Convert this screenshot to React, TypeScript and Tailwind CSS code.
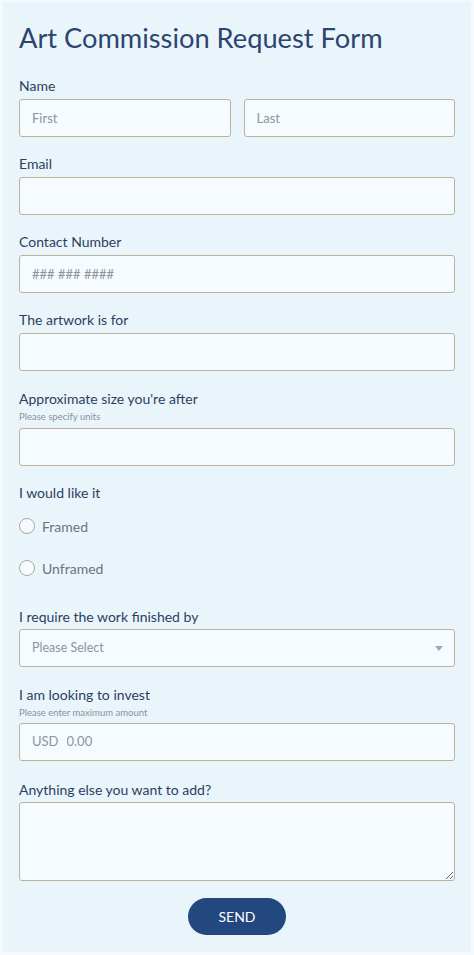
import React from "react";

const font = { fontFamily: "Lato, 'Noto Sans', sans-serif" };

function Label({ children }: { children: React.ReactNode }) {
  return <div className="h-5 text-[14px] leading-5 text-[#2a3f5f]">{children}</div>;
}

function Sub({ children }: { children: React.ReactNode }) {
  return <div className="mt-[2px] h-3 text-[9.5px] leading-3 text-[#8a9299]">{children}</div>;
}

const inputCls =
  "block h-[38px] w-full rounded-[3px] border border-[#bdb398] bg-[#f5fbfe] px-3 text-[13px] text-[#2a3f5f] placeholder:text-[#8f959b] outline-none";

function Radio({ label }: { label: string }) {
  return (
    <div className="flex h-6 items-center gap-[7px]">
      <span className="h-4 w-4 rounded-full border-[1.5px] border-[#aaa89c] bg-[#f5fbfe]" />
      <span className="text-[14px] text-[#6b7480]">{label}</span>
    </div>
  );
}

export default function App() {
  return (
    <div className="min-h-[955px] bg-[#f3f9fc] px-[3px] pt-[2px]" style={font}>
      <div className="bg-[#eaf5fb] px-4 pb-[17px] pt-[19px]">
        <h1 className="h-[33px] text-[27.25px] leading-[33px] text-[#2b4570]">Art Commission Request Form</h1>

        <div className="mt-[22px]">
          <Label>Name</Label>
          <div className="mt-[3px] grid grid-cols-2 gap-[13px]">
            <input className={inputCls} placeholder="First" />
            <input className={inputCls} placeholder="Last" />
          </div>
        </div>

        <div className="mt-[17px]">
          <Label>Email</Label>
          <input className={`${inputCls} mt-[3px]`} />
        </div>

        <div className="mt-[17px]">
          <Label>Contact Number</Label>
          <input className={`${inputCls} mt-[3px]`} placeholder="### ### ####" />
        </div>

        <div className="mt-[17px]">
          <Label>The artwork is for</Label>
          <input className={`${inputCls} mt-[3px]`} />
        </div>

        <div className="mt-[18px]">
          <Label>Approximate size you're after</Label>
          <Sub>Please specify units</Sub>
          <input className={`${inputCls} mt-[5px]`} />
        </div>

        <div className="mt-[17px]">
          <Label>I would like it</Label>
          <div className="mt-[11px] flex flex-col gap-[18px]">
            <Radio label="Framed" />
            <Radio label="Unframed" />
          </div>
        </div>

        <div className="mt-[27px]">
          <Label>I require the work finished by</Label>
          <div className={`${inputCls} mt-[2px] flex items-center justify-between pr-[11px]`}>
            <span className="text-[12.5px] text-[#8f959b]">Please Select</span>
            <svg width="8" height="5" viewBox="0 0 8 5">
              <path d="M0 0h8L4 5z" fill="#a3a7ab" />
            </svg>
          </div>
        </div>

        <div className="mt-[18px]">
          <Label>I am looking to invest</Label>
          <Sub>Please enter maximum amount</Sub>
          <div className={`${inputCls} mt-[4px] flex items-center gap-2`}>
            <span className="text-[#8f959b]">USD</span>
            <input className="w-full bg-transparent text-[13px] outline-none placeholder:text-[#8f959b]" placeholder="0.00" />
          </div>
        </div>

        <div className="mt-[19px]">
          <Label>Anything else you want to add?</Label>
          <textarea className="mt-[2px] block h-[79px] w-full rounded-[3px] border border-[#bdb398] bg-[#f5fbfe] px-3 py-2 text-[13px] outline-none" />
        </div>

        <div className="mt-[17px] flex justify-center">
          <button className="h-[37px] w-[98px] rounded-full bg-[#23477f] text-[14px] text-white">SEND</button>
        </div>
      </div>
    </div>
  );
}
